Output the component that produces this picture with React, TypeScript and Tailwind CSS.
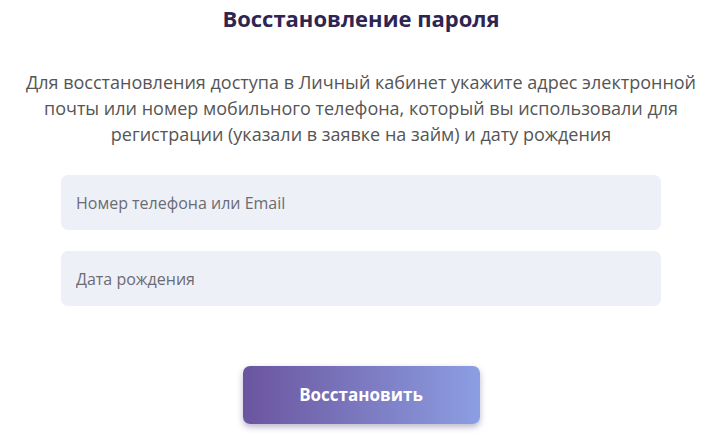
export default function App() {
  return (
    <div className="min-h-[441px] w-full bg-white font-['Open_Sans',sans-serif]">
      <div className="mx-auto flex w-[722px] flex-col items-center">
        <h1 className="mt-[4px] text-[22px] font-bold leading-[28px] text-[#2e2552]">
          Восстановление пароля
        </h1>

        <p className="mt-[37px] px-[16px] text-center text-[18px] leading-[26px] text-[#555]">
          Для восстановления доступа в Личный кабинет укажите адрес электронной почты или номер мобильного телефона, который вы использовали для регистрации (указали в заявке на займ) и дату рождения
        </p>

        <form className="mt-[28px] flex w-[600px] flex-col gap-[21px]">
          <input
            type="text"
            placeholder="Номер телефона или Email"
            className="h-[55px] w-full rounded-[7px] bg-[#eef0f8] px-[15px] text-[16px] text-[#333] outline-none placeholder:text-[#6b6b72]"
          />
          <input
            type="text"
            placeholder="Дата рождения"
            className="h-[55px] w-full rounded-[7px] bg-[#eef0f8] px-[15px] text-[16px] text-[#333] outline-none placeholder:text-[#6b6b72]"
          />
        </form>

        <button
          type="button"
          className="mt-[60px] h-[58px] w-[237px] rounded-[7px] bg-gradient-to-r from-[#6a559f] to-[#8c9ee2] text-[17px] font-bold text-white shadow-[0_3px_6px_rgba(60,50,110,0.35)]"
        >
          Восстановить
        </button>
      </div>
    </div>
  );
}
